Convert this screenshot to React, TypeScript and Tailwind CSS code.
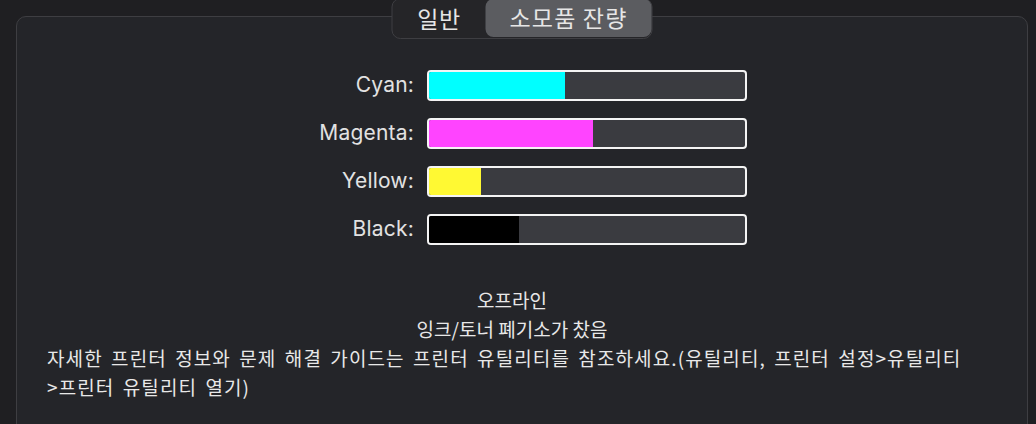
import React from 'react';

const inks = [
  { name: 'Cyan', level: 43, color: 'bg-[#00ffff]' },
  { name: 'Magenta', level: 52, color: 'bg-[#ff44ff]' },
  { name: 'Yellow', level: 16.5, color: 'bg-[#fff933]' },
  { name: 'Black', level: 28.5, color: 'bg-black' },
];

const korean = "font-['Noto_Sans_CJK_KR','Noto_Sans',sans-serif]";

export default function App() {
  return (
    <div className="w-[1036px] h-[424px] overflow-hidden bg-[#1f1f22] pt-4 pl-4 pr-2">
      <div className="relative h-[440px] rounded-[10px] border border-[#3e3e42] bg-[#242529]">
        {/* segmented tabs */}
        <div
          className={`absolute left-1/2 -translate-x-1/2 top-[-19px] h-[41px] w-[261px] flex items-stretch rounded-[9px] border border-[#3e3e42] bg-[#252528] ${korean} text-[23px] text-[#e6e6e6]`}
        >
          <div className="w-[93px] flex items-end justify-center pb-[3px] tracking-[0.5px]">일반</div>
          <div className="flex-1 flex items-end justify-center pb-[3px] mb-[1px] rounded-[8px] bg-[#5b5c60] tracking-[1.2px]">
            소모품 잔량
          </div>
        </div>

        {/* ink levels */}
        <div className="pt-[53px] pl-[283px] flex flex-col gap-[18px]">
          {inks.map((ink) => (
            <div key={ink.name} className="flex items-center h-[30px]">
              <div className="w-[114px] text-right text-[21px] tracking-[0.2px] text-[#e2e2e2] font-['Inter','Noto_Sans',sans-serif]">
                {ink.name}:
              </div>
              <div className="ml-[13px] w-[320px] h-[31px] rounded-[4px] border-2 border-[#f4f4f4] bg-[#3a3b40] overflow-hidden">
                <div className={`h-full ${ink.color}`} style={{ width: `${ink.level}%` }} />
              </div>
            </div>
          ))}
        </div>

        {/* status */}
        <div className={`mt-[41px] ml-[30px] w-[930px] text-[19px] leading-[29px] text-[#e8e8e8] ${korean}`}>
          <p className="text-center">오프라인</p>
          <p className="text-center">잉크/토너 폐기소가 찼음</p>
          <p className="tracking-[1.1px] [word-spacing:3px]">
            자세한 프린터 정보와 문제 해결 가이드는 프린터 유틸리티를 참조하세요.(유틸리티, 프린터 설정&gt;유틸리티
            <br />
            &gt;프린터 유틸리티 열기)
          </p>
        </div>
      </div>
    </div>
  );
}
